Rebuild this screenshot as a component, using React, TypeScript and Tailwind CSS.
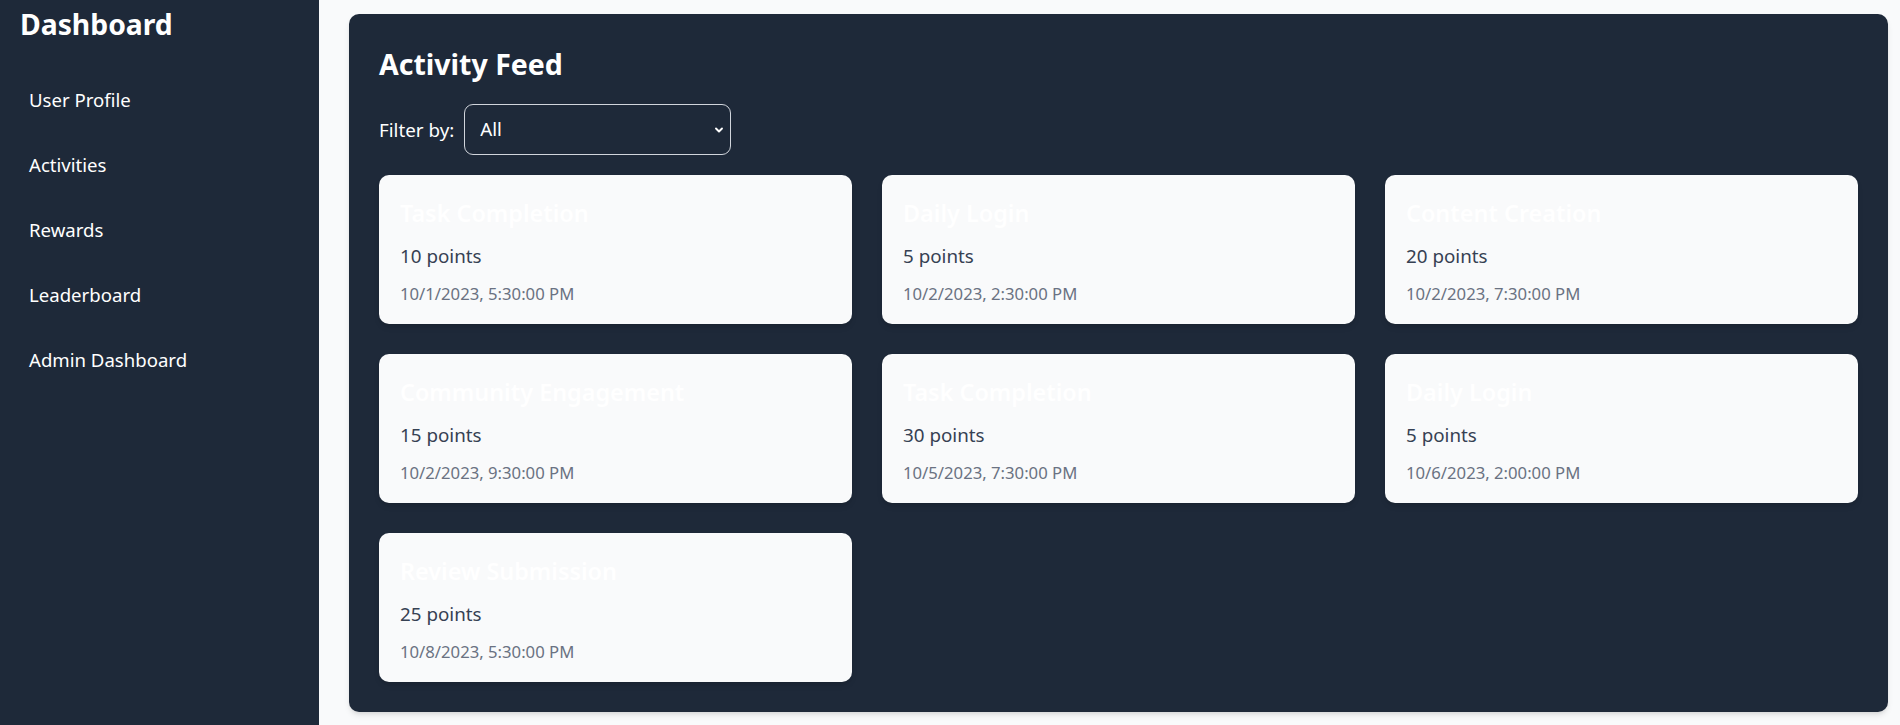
import { useState } from 'react';

type Activity = { id: number; type: string; points: number; date: string };

const activities: Activity[] = [
  { id: 1, type: 'Task Completion', points: 10, date: '10/1/2023, 5:30:00 PM' },
  { id: 2, type: 'Daily Login', points: 5, date: '10/2/2023, 2:30:00 PM' },
  { id: 3, type: 'Content Creation', points: 20, date: '10/2/2023, 7:30:00 PM' },
  { id: 4, type: 'Community Engagement', points: 15, date: '10/2/2023, 9:30:00 PM' },
  { id: 5, type: 'Task Completion', points: 30, date: '10/5/2023, 7:30:00 PM' },
  { id: 6, type: 'Daily Login', points: 5, date: '10/6/2023, 2:00:00 PM' },
  { id: 7, type: 'Review Submission', points: 25, date: '10/8/2023, 5:30:00 PM' },
];

const links = ['User Profile', 'Activities', 'Rewards', 'Leaderboard', 'Admin Dashboard'];

function Sidebar() {
  return (
    <aside className="flex h-full w-[319px] shrink-0 flex-col bg-gray-800 px-[20px] pt-[4px] text-white">
      <h1 className="text-[28.3px] leading-[40px] font-bold">Dashboard</h1>
      <nav className="mt-[23px] flex flex-col">
        {links.map((l) => (
          <a key={l} href="#" className="flex h-[65px] items-center px-[9px] text-[18.6px] leading-[30px]">
            {l}
          </a>
        ))}
      </nav>
    </aside>
  );
}

export default function App() {
  const [filter, setFilter] = useState('All');
  const shown = filter === 'All' ? activities : activities.filter((a) => a.type === filter);

  return (
    <div className="flex h-screen w-full overflow-hidden font-['Segoe_UI','Noto_Sans',sans-serif]">
      <Sidebar />
      {/* 主内容区 */}
      <main className="flex-1 bg-gray-50 pt-[14px] pr-[12px] pl-[30px]">
        <section className="rounded-[10px] bg-gray-800 p-[30px] shadow-md">
          <h2 className="mb-[20px] text-[28.5px] leading-[40px] font-bold text-white">Activity Feed</h2>
          <div className="mb-[20px] flex items-center">
            <label className="mr-[10px] text-[18.8px] leading-[30px] text-white">Filter by:</label>
            <div className="relative">
              <select
                value={filter}
                onChange={(e) => setFilter(e.target.value)}
                className="h-[51px] w-[267px] appearance-none rounded-[9px] border border-gray-300 bg-gray-800 pl-[15px] text-[18.8px] text-white outline-none"
              >
                <option>All</option>
                <option>Task Completion</option>
                <option>Daily Login</option>
                <option>Content Creation</option>
                <option>Community Engagement</option>
                <option>Review Submission</option>
              </select>
              <svg
                className="pointer-events-none absolute top-1/2 right-[6px] -translate-y-1/2"
                width="12"
                height="12"
                viewBox="0 0 12 12"
                fill="none"
                stroke="white"
                strokeWidth="1.9"
                strokeLinecap="round"
                strokeLinejoin="round"
              >
                <path d="M3 4.5 6 7.5 9 4.5" />
              </svg>
            </div>
          </div>
          <div className="grid grid-cols-3 gap-[30px]">
            {shown.map((a) => (
              <div key={a.id} className="h-[149px] rounded-[10px] bg-gray-50 px-[21px] pt-[21px] shadow-md">
                <h3 className="mb-[10px] text-[23.4px] leading-[35px] font-semibold text-white">{a.type}</h3>
                <p className="text-[18.8px] leading-[30px] text-gray-700">{a.points} points</p>
                <p className="mt-[10px] text-[16.7px] leading-[25px] text-gray-500">{a.date}</p>
              </div>
            ))}
          </div>
        </section>
      </main>
    </div>
  );
}
